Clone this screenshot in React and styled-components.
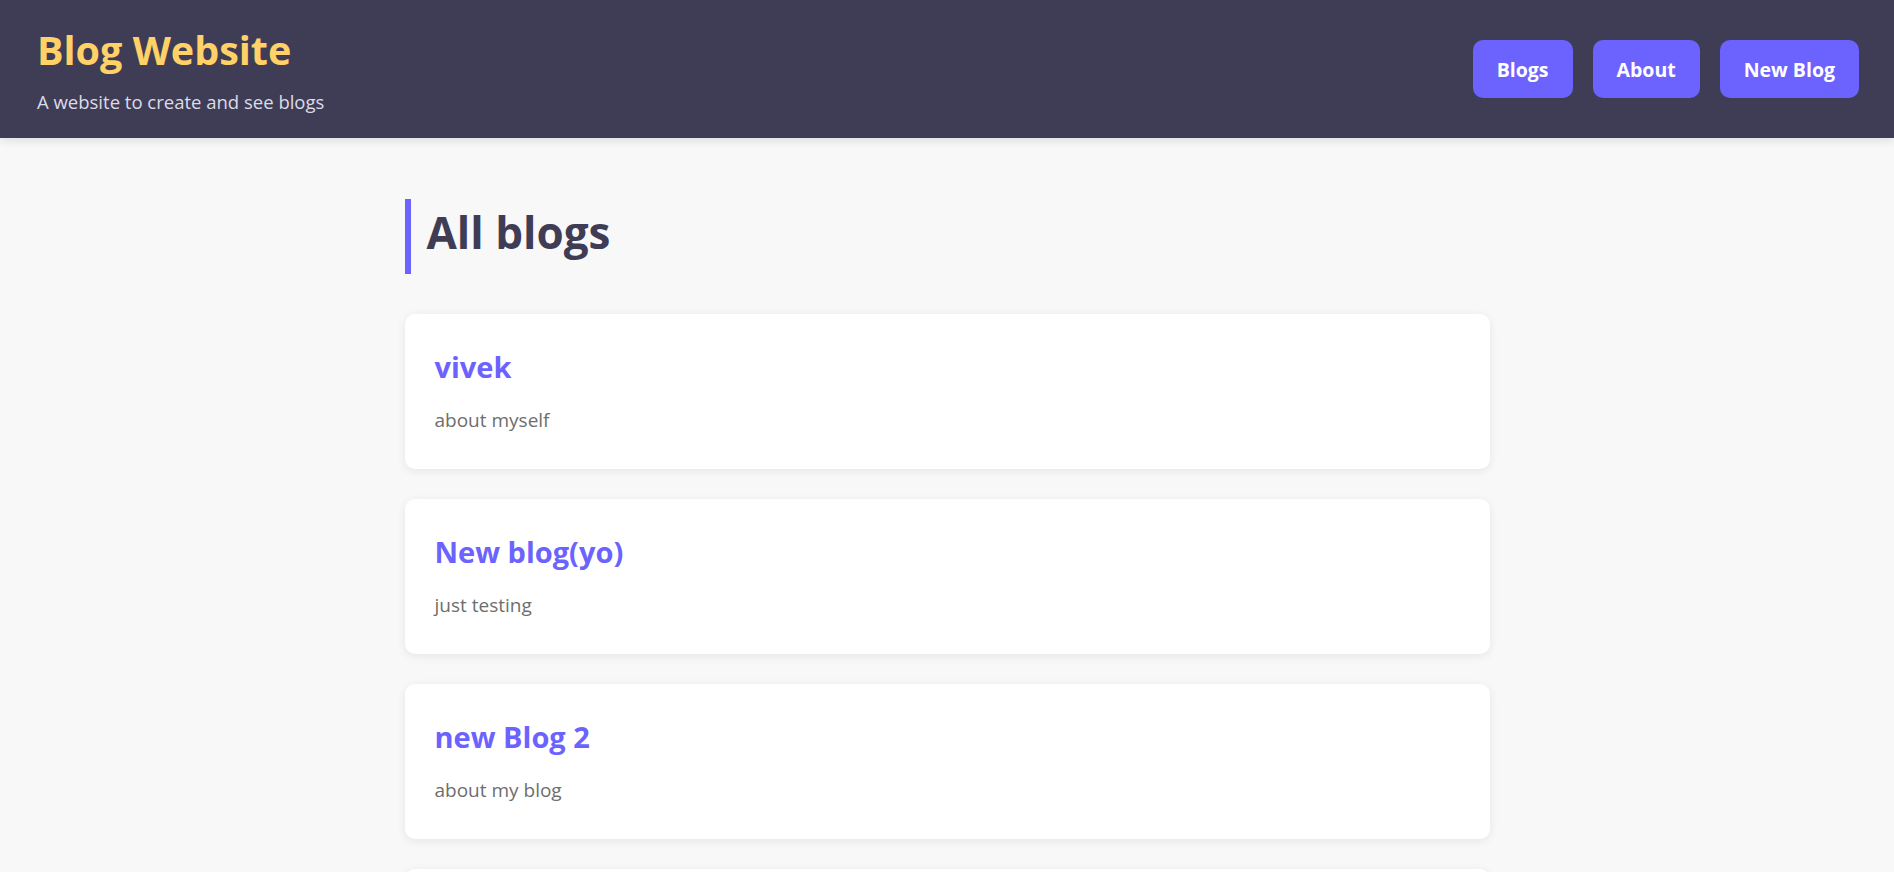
import React from "react";
import styled, { createGlobalStyle } from "styled-components";

const GlobalStyle = createGlobalStyle`
  * { box-sizing: border-box; }
  body {
    margin: 0;
    background: #f8f8f8;
    font-family: "Open Sans", Lato, "Noto Sans", sans-serif;
  }
`;

const Header = styled.header`
  height: 138px;
  padding: 2px 35px 0 37px;
  background: #3f3d56;
  display: flex;
  align-items: center;
  justify-content: space-between;
  box-shadow: 0 2px 10px rgba(0, 0, 0, 0.12);
`;

const Brand = styled.div`
  display: flex;
  flex-direction: column;
`;

const SiteTitle = styled.h1`
  margin: 0;
  font-size: 39.5px;
  line-height: 48px;
  font-weight: 700;
  color: #ffd166;
`;

const Tagline = styled.p`
  margin: 16px 0 0;
  font-size: 18.5px;
  line-height: 24px;
  color: #dcdbe6;
`;

const Nav = styled.nav`
  display: flex;
  gap: 20px;
  margin-top: -2px;
`;

const NavButton = styled.a`
  height: 58px;
  padding: 0 24px;
  display: flex;
  align-items: center;
  background: #6c63ff;
  color: #ffffff;
  border-radius: 10px;
  font-size: 19.5px;
  font-weight: 700;
  text-decoration: none;
  cursor: pointer;
`;

const Main = styled.main`
  max-width: 1085px;
  margin: 0 auto;
  padding: 61px 0 40px;
`;

const PageTitle = styled.h2`
  margin: 0 0 40px;
  padding: 8px 0 17px 16px;
  border-left: 6px solid #6c63ff;
  font-size: 44px;
  line-height: 50px;
  font-weight: 700;
  color: #3f3d56;
`;

const CardList = styled.div`
  display: flex;
  flex-direction: column;
  gap: 30px;
`;

const Card = styled.article`
  background: #ffffff;
  border-radius: 10px;
  padding: 35px 30px;
  height: 155px;
  box-shadow: 0 2px 10px rgba(0, 0, 0, 0.08);
`;

const CardTitle = styled.h3`
  margin: 0;
  font-size: 29px;
  line-height: 36px;
  font-weight: 700;
  color: #6c63ff;
`;

const CardText = styled.p`
  margin: 22px 0 0;
  font-size: 19px;
  line-height: 27px;
  color: #6e6e6e;
`;

const blogs = [
  { title: "vivek", body: "about myself" },
  { title: "New blog(yo)", body: "just testing" },
  { title: "new Blog 2", body: "about my blog" },
  { title: "new Blog 3", body: "about my blog" },
];

export default function App() {
  return (
    <>
      <GlobalStyle />
      <Header>
        <Brand>
          <SiteTitle>Blog Website</SiteTitle>
          <Tagline>A website to create and see blogs</Tagline>
        </Brand>
        <Nav>
          <NavButton>Blogs</NavButton>
          <NavButton>About</NavButton>
          <NavButton>New Blog</NavButton>
        </Nav>
      </Header>
      <Main>
        <PageTitle>All blogs</PageTitle>
        <CardList>
          {blogs.map((b) => (
            <Card key={b.title}>
              <CardTitle>{b.title}</CardTitle>
              <CardText>{b.body}</CardText>
            </Card>
          ))}
        </CardList>
      </Main>
    </>
  );
}
